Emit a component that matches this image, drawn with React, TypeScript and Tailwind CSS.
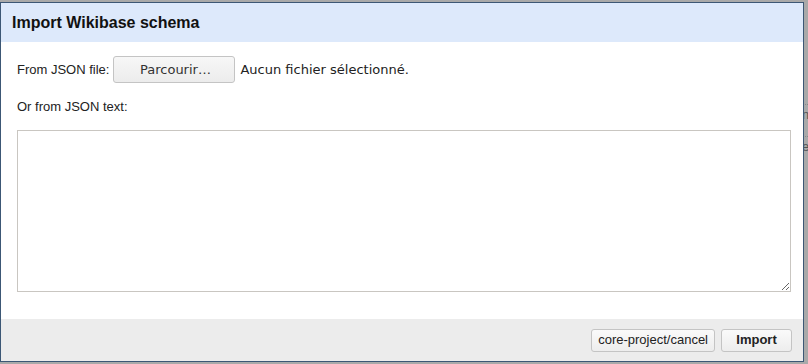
export default function App() {
  return (
    <div className="relative h-[364px] w-[808px] overflow-hidden bg-[#a9a9a9] font-['Liberation_Sans',Arial,sans-serif] text-[13px] text-[#222]">
      {/* page behind the overlay */}
      <div className="absolute right-0 top-[104px] w-[6px] border-t border-dotted border-[#8a8a8a] pt-[2px] text-[13px] leading-[16px] text-[#555]">n-</div>
      <div className="absolute right-0 top-[136px] w-[6px] border-t border-dotted border-[#8a8a8a] pt-[2px] text-[13px] leading-[16px] text-[#555]">e</div>

      <div className="relative mt-[2px] flex h-[360px] w-[804px] flex-col border border-[#3c5775] bg-white">
        <div className="flex h-[39px] items-center bg-[#dde9fb] px-[11px] text-[16px] font-bold text-[#111]">
          Import Wikibase schema
        </div>
        <div className="flex flex-1 flex-col px-[16px] pt-[14px]">
          <div className="flex items-center">
            <span>From JSON file:</span>
            <button className="ml-[4px] h-[27px] w-[122px] rounded-[3px] border border-[#c4c4c4] bg-gradient-to-b from-[#f7f7f7] to-[#ececec] pl-[2px] font-['DejaVu_Sans',sans-serif] text-[13px] text-[#333]">
              Parcourir…
            </button>
            <span className="ml-[5px] font-['DejaVu_Sans',sans-serif] text-[13px] text-[#222]">
              Aucun fichier sélectionné.
            </span>
          </div>
          <div className="mt-[14px]">Or from JSON text:</div>
          <textarea className="mt-[13px] h-[162px] w-[774px] border border-[#c9c6c1] bg-white outline-none" />
        </div>
        <div className="flex h-[42px] items-center justify-end gap-[6px] bg-[#ececec] pr-[11px]">
          <button className="h-[23px] rounded-[3px] border border-[#c4c4c4] bg-gradient-to-b from-[#fafafa] to-[#ededed] px-[6px] text-[13px] text-[#222]">
            core-project/cancel
          </button>
          <button className="h-[23px] w-[71px] rounded-[3px] border border-[#c4c4c4] bg-gradient-to-b from-[#fafafa] to-[#ededed] text-[13px] font-bold text-[#222]">
            Import
          </button>
        </div>
      </div>
    </div>
  );
}
